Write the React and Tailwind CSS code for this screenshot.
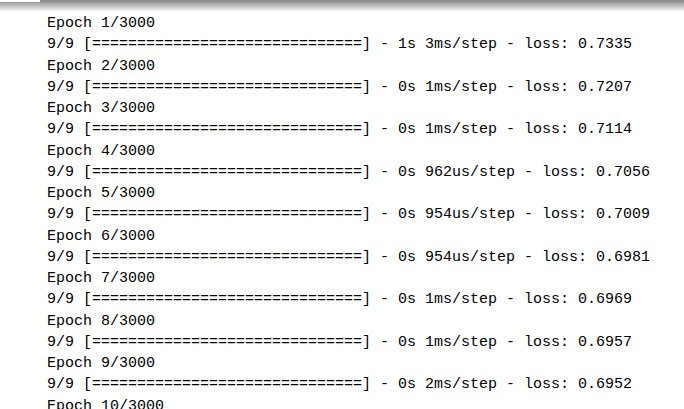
import React from "react";

const losses = ["0.7335", "0.7207", "0.7114", "0.7056", "0.7009", "0.6981", "0.6969", "0.6957", "0.6952"];
const timings = [
  "1s 3ms/step",
  "0s 1ms/step",
  "0s 1ms/step",
  "0s 962us/step",
  "0s 954us/step",
  "0s 954us/step",
  "0s 1ms/step",
  "0s 1ms/step",
  "0s 2ms/step",
];

const bar = "=".repeat(30);

export default function App() {
  const lines = [];
  losses.forEach((loss, i) => {
    lines.push(`Epoch ${i + 1}/3000`);
    lines.push(`9/9 [${bar}] - ${timings[i]} - loss: ${loss}`);
  });
  lines.push("Epoch 10/3000");

  return (
    <div className="w-[684px] h-[409px] bg-white overflow-hidden">
      {/* window edge shadow */}
      <div className="flex h-[2px]">
        <div className="w-[40px] bg-white" />
        <div className="flex-1 bg-[#8f8f8f]" />
      </div>
      <div className="h-[10px] bg-gradient-to-b from-[#9a9a9a] to-white" />
      <pre
        className="pl-[47px] pt-[1px] text-[15px] leading-[21.25px] text-black"
        style={{ fontFamily: '"Liberation Mono", monospace' }}
      >
        {lines.join("\n")}
      </pre>
    </div>
  );
}
